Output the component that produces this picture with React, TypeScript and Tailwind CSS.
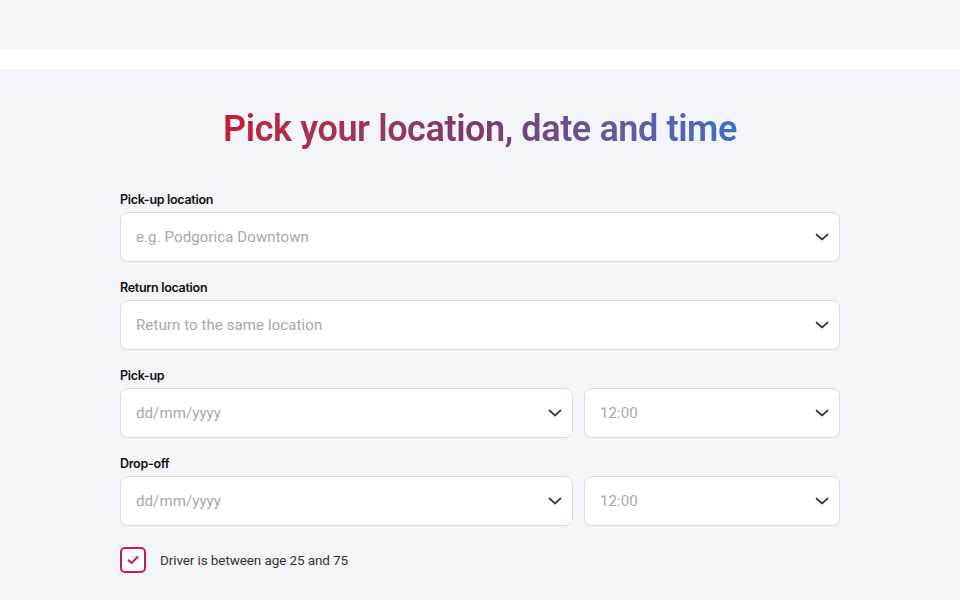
import React from "react";

function Chevron() {
  return (
    <svg width="16" height="16" viewBox="0 0 16 16" fill="none" className="shrink-0">
      <path d="M2.5 5.5 L8 10.5 L13.5 5.5" stroke="#3a3a3a" strokeWidth="1.7" strokeLinecap="round" strokeLinejoin="round" />
    </svg>
  );
}

function Field({ placeholder, className = "" }: { placeholder: string; className?: string }) {
  return (
    <div className={"h-[50px] bg-white border border-[#d9dbe3] rounded-[8px] flex items-center justify-between pl-[15px] pr-[9px] " + className}>
      <span className="text-[15px] text-[#a5a8af] tracking-[0.1px]">{placeholder}</span>
      <Chevron />
    </div>
  );
}

function Label({ children }: { children: React.ReactNode }) {
  return (
    <div className="text-[12.5px] font-semibold text-[#111] tracking-[-0.3px] leading-[16px] mb-[4px]" style={{ fontFamily: "Inter, sans-serif" }}>
      {children}
    </div>
  );
}

export default function App() {
  return (
    <div className="w-[960px] h-[600px] bg-[#f4f5fb] overflow-hidden" style={{ fontFamily: "Roboto, 'Noto Sans', sans-serif" }}>
      <div className="h-[49px]" />
      <div className="h-[22px] bg-white border-b border-[#ebedf3]" />
      <div className="flex flex-col items-center pt-[36px]">
        <h1
          className="text-[36px] font-semibold leading-[44px] tracking-[-0.4px] bg-clip-text text-transparent bg-gradient-to-r from-[#c41e35] via-[#7a3a6e] to-[#3a70c4]"
        >
          Pick your location, date and time
        </h1>
      </div>
      <div className="w-[720px] mx-auto mt-[41px] flex flex-col">
        <Label>Pick-up location</Label>
        <Field placeholder="e.g. Podgorica Downtown" />
        <div className="h-[18px]" />
        <Label>Return location</Label>
        <Field placeholder="Return to the same location" />
        <div className="h-[18px]" />
        <Label>Pick-up</Label>
        <div className="flex gap-[11px]">
          <Field placeholder="dd/mm/yyyy" className="w-[453px]" />
          <Field placeholder="12:00" className="flex-1" />
        </div>
        <div className="h-[18px]" />
        <Label>Drop-off</Label>
        <div className="flex gap-[11px]">
          <Field placeholder="dd/mm/yyyy" className="w-[453px]" />
          <Field placeholder="12:00" className="flex-1" />
        </div>
        <div className="flex items-center gap-[14px] mt-[21px]">
          <div className="w-[26px] h-[26px] rounded-[5px] border-2 border-[#c41e4a] bg-white flex items-center justify-center">
            <svg width="14" height="14" viewBox="0 0 14 14" fill="none">
              <path d="M2.5 7.2 L5.6 10 L11.5 4" stroke="#c41e4a" strokeWidth="2" strokeLinecap="round" strokeLinejoin="round" />
            </svg>
          </div>
          <span className="text-[13.5px] text-[#333] tracking-[-0.1px]">Driver is between age 25 and 75</span>
        </div>
      </div>
    </div>
  );
}
